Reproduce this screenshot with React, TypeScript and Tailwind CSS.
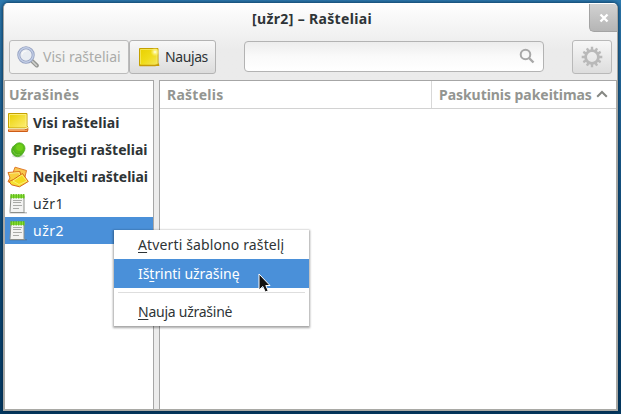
import React from "react";

function Magnifier() {
  return (
    <svg className="h-[22px] w-[22px] shrink-0 opacity-60" viewBox="0 0 22 22" fill="none">
      <path d="M14 14L19.8 19.5" stroke="#555753" strokeWidth="4" strokeLinecap="round" />
      <path d="M15 15L19.5 19.5" stroke="#b9bbb7" strokeWidth="1.6" strokeLinecap="round" />
      <circle cx="9" cy="9" r="7.2" fill="#e4eaf3" stroke="#54699f" strokeWidth="3" />
      <circle cx="9" cy="9" r="7.2" stroke="#a3b6e0" strokeWidth="1.4" />
      <path d="M5 8.5Q6 5 9.5 5" stroke="#fff" strokeWidth="1.2" />
    </svg>
  );
}

function NewNote() {
  return (
    <svg className="h-[20px] w-[22px] shrink-0" viewBox="0 0 22 20">
      <defs>
        <linearGradient id="newNote" x1="0" y1="0" x2="1" y2="1">
          <stop offset="0" stopColor="#e8cf00" />
          <stop offset=".5" stopColor="#f0dc18" />
          <stop offset="1" stopColor="#f4e668" />
        </linearGradient>
        <radialGradient id="shine">
          <stop offset="0" stopColor="#fff" />
          <stop offset=".3" stopColor="#fffbb0" stopOpacity=".8" />
          <stop offset="1" stopColor="#fff27a" stopOpacity="0" />
        </radialGradient>
      </defs>
      <path d="M1.5 1.5H20V16L21 18.5H1.5Z" fill="url(#newNote)" stroke="#c4a000" />
      <path d="M2.5 17V2.5H19V16" fill="none" stroke="#f8ec70" strokeWidth=".7" />
      <path d="M1.5 18.5H17L21 17.5" fill="none" stroke="#c79b08" strokeWidth="1.3" />
      <circle cx="17" cy="5" r="4.5" fill="url(#shine)" />
    </svg>
  );
}

function NoteStack() {
  return (
    <svg className="h-[22px] w-[22px] shrink-0" viewBox="0 0 22 22">
      <defs>
        <linearGradient id="stack" x1="0" y1="0" x2="1" y2="1">
          <stop offset="0" stopColor="#e9cf00" />
          <stop offset="1" stopColor="#fff07b" />
        </linearGradient>
      </defs>
      <path d="M1.5 17.5H19L21 16.5L20.5 19.5H1.5Z" fill="#f5a05c" stroke="#cd5c16" />
      <path d="M1.5 1.5H20V13.5L21 16H1.5Z" fill="url(#stack)" stroke="#c4a000" />
      <path d="M2.5 14.5V2.5H19V13.5" fill="none" stroke="#fff48a" strokeWidth=".8" />
      <path d="M1.5 17H17.5L21 15.5" fill="none" stroke="#fff3c0" />
    </svg>
  );
}

function Pin() {
  return (
    <svg className="h-[22px] w-[22px] shrink-0" viewBox="0 0 22 22">
      <ellipse cx="11.5" cy="17.2" rx="6.5" ry="1.6" fill="#9ca39a" opacity=".35" />
      <circle cx="10.6" cy="11.6" r="6" fill="#4fae1d" stroke="#5cb035" />
      <circle cx="12.4" cy="9.4" r="5.6" fill="#5cbd18" stroke="#50ae20" strokeWidth=".8" />
      <circle cx="12.6" cy="8.6" r="3.4" fill="#70cf1a" />
      <path d="M6 11.5Q7.5 16.5 13 15.8" fill="none" stroke="#79cc42" strokeWidth="1" />
    </svg>
  );
}

function LooseNotes() {
  return (
    <svg className="h-[22px] w-[22px] shrink-0" viewBox="0 0 22 22" strokeLinejoin="round">
      <path d="M8 1.2L19.5 4.5L17 15L4.5 11Z" fill="#f8c84e" stroke="#e07a2c" />
      <path d="M1 6.5L13 5.5L15 16L5.5 18.5L1 15.5L3 12Z" fill="#f8cf3e" stroke="#dc7022" />
      <path d="M2.3 7.5L12 6.6L13 11" fill="none" stroke="#fff09a" strokeWidth=".8" />
      <path d="M15.5 7.5L21.3 15.5L12.5 20.8L4.5 18.8L2 15.5L6.5 13.5Z" fill="#f5e032" stroke="#d6651a" />
      <path d="M15 9L19.8 15L12 18.5L6 15Z" fill="#f3db20" stroke="#fff393" strokeWidth=".7" />
    </svg>
  );
}

function Notebook() {
  return (
    <svg className="h-[22px] w-[22px] shrink-0" viewBox="-1 0 22 22" fill="none">
      <path d="M1.5 19.8H19" stroke="#555" strokeWidth="1.6" opacity=".35" />
      <path d="M3 3H16V18.5Q16.6 19 16.4 19.5H2.6Q1.8 19.5 2 18.5Z" fill="#f3f3f2" stroke="#8c8e8a" />
      <path d="M2.5 1.5H16.5V5H2.5Z" fill="#8ae234" />
      <path d="M3.2 1V5.5M5.7 1V5.5M8.2 1V5.5M10.7 1V5.5M13.2 1V5.5M15.7 1V5.5" stroke="#5fb81c" strokeWidth="1.2" />
      <path d="M5 7.5H14M5 9.5H13M5 12.5H14M5 15.5H11" stroke="#a0a29e" strokeWidth=".9" />
    </svg>
  );
}

function Gear() {
  return (
    <svg className="h-[22px] w-[22px]" viewBox="-11 -11 22 22" fill="none" stroke="#b9b9b9">
      <circle r="6.4" strokeWidth="2.8" />
      <path
        strokeWidth="2.4"
        d="M0-6.5V-10.3M0 6.5V10.3M-6.5 0H-10.3M6.5 0H10.3M3.3-5.6L5.1-8.7M5.6-3.3L8.7-5.1M5.6 3.3L8.7 5.1M3.3 5.6L5.1 8.7M-3.3 5.6L-5.1 8.7M-5.6 3.3L-8.7 5.1M-5.6-3.3L-8.7-5.1M-3.3-5.6L-5.1-8.7"
      />
    </svg>
  );
}

const rows = [
  { icon: <NoteStack />, label: "Visi rašteliai", style: "font-bold tracking-[0.12px]" },
  { icon: <Pin />, label: "Prisegti rašteliai", style: "font-bold tracking-[0.03px]" },
  { icon: <LooseNotes />, label: "Neįkelti rašteliai", style: "font-bold tracking-[-0.05px]" },
  { icon: <Notebook />, label: "užr1", style: "tracking-[0.5px]" },
  { icon: <Notebook />, label: "užr2", style: "tracking-[0.5px]", selected: true },
];

export default function App() {
  return (
    <div className="relative h-[414px] w-[621px] overflow-hidden bg-linear-to-b from-[#2e7bb0] via-[#145180] to-[#043961] px-[3px] pt-[3px] pb-[3px] font-['Noto_Sans','Open_Sans',sans-serif] text-[14px] leading-5 text-[#2e3436]">
      <div className="flex h-[408px] w-[615px] flex-col overflow-hidden rounded-t-[5px] border-x border-t border-t-white border-x-[#a6a6a2] bg-[#ececec] shadow-[0_0_4px_#00223f]">
        <header className="flex h-[76px] shrink-0 flex-col bg-linear-to-b from-[#fefefe] to-[#ebebeb] to-60%">
          <div className="flex h-[36px] justify-end">
            <h1 className="w-[585px] pt-[5px] pl-[248px] text-[14px] font-bold tracking-[0.35px] whitespace-nowrap">[užr2] – Rašteliai</h1>
            <button className="flex h-[28px] w-[28px] shrink-0 items-center justify-center rounded-bl-[5px] border-b border-l border-[#a3a3a3] bg-linear-to-b from-[#d2d2d2] to-[#b5b5b5]">
              <svg className="h-[10px] w-[10px]" viewBox="0 0 10 10" stroke="#fff" strokeWidth="2.4"><path d="M1.5 1.5L8.5 8.5M8.5 1.5L1.5 8.5" /></svg>
            </button>
          </div>
          <div className="flex pl-[5px]">
            <button className="flex h-[34px] w-[120px] items-center rounded-[3px] border border-[#bcbcbc] bg-[#f3f3f2] pl-[7px] text-[#aaaba9]">
              <Magnifier />
              <span className="ml-[4px] whitespace-nowrap">Visi rašteliai</span>
            </button>
            <button className="flex h-[34px] w-[87px] items-center rounded-[3px] border border-[#b3b3b3] bg-linear-to-b from-[#f8f8f8] to-[#dcdcdc] pl-[8px]">
              <NewNote />
              <span className="ml-[5px] tracking-[-0.4px] whitespace-nowrap">Naujas</span>
            </button>
            <div className="mt-px ml-[28px] flex h-[31px] w-[300px] items-center justify-end rounded-[4px] border border-[#b3b3b3] bg-linear-to-b from-[#ededed] via-[#fafafa] to-white pr-[8px]">
              <svg className="mt-[-2px] h-[16px] w-[16px]" viewBox="0 0 16 16" fill="none" stroke="#a8a8a8" strokeWidth="2"><circle cx="6.5" cy="6.5" r="4.8" /><path d="M10 10L14.5 14.5" strokeWidth="2.4" /></svg>
            </div>
            <button className="ml-[28px] flex h-[34px] w-[40px] items-center justify-center rounded-[3px] border border-[#b9b9b9] bg-linear-to-b from-[#f7f7f7] to-[#dddddd]">
              <Gear />
            </button>
          </div>
        </header>
        <main className="flex h-[331px] shrink-0 border-x border-b-2 border-[#a9a9a5] bg-[#ececec]">
          <aside className="flex w-[149px] shrink-0 flex-col border-t border-r border-[#a6a6a6] bg-white">
            <div className="h-[28px] shrink-0 border-b border-[#d2d2d2] pt-[4px] pl-[4px] font-bold tracking-[0.3px] whitespace-nowrap text-[#939591]">Užrašinės</div>
            <ul>
              {rows.map((row) => (
                <li key={row.label} className={row.selected ? "flex h-[27px] items-center bg-[#4a90d9] pl-[2px] text-white" : "flex h-[27px] items-center pl-[2px]"}>
                  {row.icon}
                  <span className={"ml-[4px] whitespace-nowrap " + row.style}>{row.label}</span>
                </li>
              ))}
            </ul>
          </aside>
          <section className="ml-[5px] flex grow flex-col border-t border-l border-[#a6a6a6] bg-white">
            <div className="flex h-[28px] border-b border-[#d2d2d2] font-bold whitespace-nowrap text-[#939591]">
              <div className="w-[272px] shrink-0 border-r border-[#d8d8d8] pt-[4px] pl-[7px] tracking-[0.25px]">Raštelis</div>
              <div className="flex pt-[4px] pl-[7px]">
                <span className="w-[157px] shrink-0 tracking-[-0.05px]">Paskutinis pakeitimas</span>
                <svg className="mt-[5px] h-[8px] w-[12px]" viewBox="0 0 12 8" fill="none" stroke="#858782" strokeWidth="2"><path d="M1.2 6.8L6 2L10.8 6.8" /></svg>
              </div>
            </div>
          </section>
        </main>
      </div>
      <nav className="absolute top-[230px] left-[114px] flex h-[96px] w-[195px] flex-col bg-white shadow-[0_1px_2px_1px_#00000059]">
        <div className="h-[29px] pt-[5px] pl-[24px] tracking-[0.13px] whitespace-nowrap"><u className="underline-offset-2">A</u>tverti šablono raštelį</div>
        <div className="h-[29px] bg-[#4a90d9] pt-[5px] pl-[24px] tracking-[-0.05px] whitespace-nowrap text-white">Iš<u className="underline-offset-2">t</u>rinti užrašinę</div>
        <div className="mx-[4px] mt-[4px] h-px bg-[#dedede]" />
        <div className="pt-[9px] pl-[24px] tracking-[-0.25px] whitespace-nowrap"><u className="underline-offset-2">N</u>auja užrašinė</div>
      </nav>
      <svg className="absolute top-[273px] left-[258px] h-[20px] w-[13px]" viewBox="0 0 13 20">
        <path d="M1 1V17L4.8 13.5L7.3 19L10.2 17.8L7.8 12.5H12Z" fill="#111" stroke="#fff" />
      </svg>
    </div>
  );
}
